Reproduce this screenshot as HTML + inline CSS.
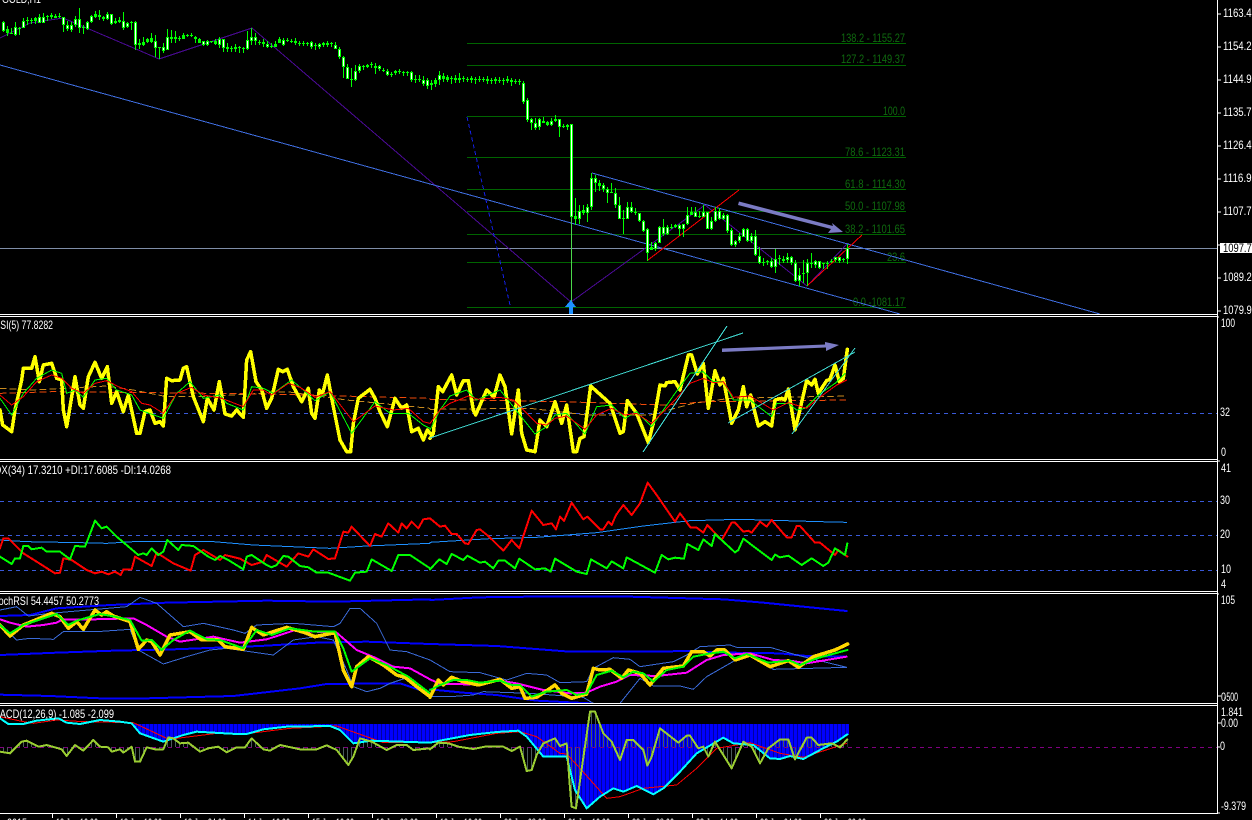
<!DOCTYPE html>
<html><head><meta charset="utf-8"><style>
html,body{margin:0;padding:0;background:#000;width:1252px;height:820px;overflow:hidden}
svg{display:block;position:absolute;left:0;top:0}
polyline,polygon{fill:none;vector-effect:non-scaling-stroke;stroke-linejoin:round;stroke-linecap:round}
text{font-family:"Liberation Sans",sans-serif;font-size:12px;fill:#fff;shape-rendering:auto}
.f{fill:#0f6a0f}
.y{stroke:#ff0;stroke-width:3.5}.g1{stroke:#0f0;stroke-width:1}.r1{stroke:#f00;stroke-width:1}
.or{stroke:#f04a0a;stroke-width:1;stroke-dasharray:6 4}.go{stroke:#c88a1e;stroke-width:1;stroke-dasharray:6 4}
.ab{stroke:#1e90ff;stroke-width:1}.re{stroke:#f00;stroke-width:2}.gr{stroke:#0f0;stroke-width:2}
.bb{stroke:#00f;stroke-width:2}.tb{stroke:#3a6ad8;stroke-width:1}.mg{stroke:#f0f;stroke-width:2}.ye{stroke:#ffd700;stroke-width:3.5}.gg{stroke:#0f0;stroke-width:2}
.cy{stroke:#0ff;stroke-width:2}.ol{stroke:#9acd32;stroke-width:2}
</style></head><body>
<svg width="1252" height="820" viewBox="0 0 1252 820" shape-rendering="crispEdges">
<defs>
<pattern id="b1" patternUnits="userSpaceOnUse" width="12" height="30"><rect width="12" height="30" fill="#00f"/><rect x="3" width="3" height="30" fill="#0000a0"/></pattern>
<pattern id="b2" patternUnits="userSpaceOnUse" width="12" height="30"><rect width="12" height="30" fill="#00f"/><rect x="9" width="3" height="30" fill="#0000a0"/></pattern>
<pattern id="s1" patternUnits="userSpaceOnUse" width="12" height="30"><rect x="9" width="3" height="30" fill="#4a5a5a"/></pattern>
<pattern id="s2" patternUnits="userSpaceOnUse" width="12" height="30"><rect x="3" width="3" height="30" fill="#4a5a5a"/></pattern>
<clipPath id="cm"><rect x="0" y="72" width="1290" height="300"/></clipPath>
</defs>

<!-- MAIN -->
<g stroke="#006400" stroke-width="1">
<path d="M467 43.5H906M467 65.5H906M467 116.5H906M467 157.5H906M467 189.5H906M467 211.5H906M467 234.5H906M467 262.5H906M467 307.5H906"/>
</g>
<text class="f" x="841" y="42" textLength="64" lengthAdjust="spacingAndGlyphs">138.2 - 1155.27</text>
<text class="f" x="841" y="63" textLength="64" lengthAdjust="spacingAndGlyphs">127.2 - 1149.37</text>
<text class="f" x="883" y="115" textLength="22" lengthAdjust="spacingAndGlyphs">100.0</text>
<text class="f" x="845" y="156" textLength="60" lengthAdjust="spacingAndGlyphs">78.6 - 1123.31</text>
<text class="f" x="845" y="188" textLength="60" lengthAdjust="spacingAndGlyphs">61.8 - 1114.30</text>
<text class="f" x="845" y="210" textLength="60" lengthAdjust="spacingAndGlyphs">50.0 - 1107.98</text>
<text class="f" x="845" y="233" textLength="60" lengthAdjust="spacingAndGlyphs">38.2 - 1101.65</text>
<text class="f" x="887" y="261" textLength="18" lengthAdjust="spacingAndGlyphs">23.6</text>
<text class="f" x="853" y="306" textLength="52" lengthAdjust="spacingAndGlyphs">0.0 -1081.17</text>
<path d="M0 248.5H1217" stroke="#7f8ea8" fill="none"/>
<path d="M0 38L30 23L63 18L136 49L159 59L252 28L571 302L705 205L807 286L848 243" stroke="#4b0a96" fill="none"/>
<path d="M0 65L900 314M592 173L1100 314" stroke="#3f6ee0" fill="none"/>
<path d="M467 117L510 305" stroke="#1420e6" stroke-dasharray="4 3" fill="none"/>
<path d="M648 260L739 190M807 286L862 235" stroke="#f00" fill="none"/>
<g transform="translate(.5 0)" fill="none">
<path stroke="#0f0" stroke-width="1" d="M3 21V32M7 26V36M11 28V34M15 22V36M19 27V35M23 18V28M27 17V25M31 18V24M35 17V24M39 14V23M43 13V23M47 15V21M51 13V19M55 14V18M59 13V18M63 17V32M67 21V31M71 22V32M75 16V27M79 8V33M83 25V34M87 21V30M91 15V23M95 11V18M99 10V20M103 16V21M107 12V20M111 14V25M115 18V24M119 17V23M123 12V30M127 22V28M131 21V30M135 21V50M139 39V49M143 37V46M147 38V43M151 33V43M155 35V57M159 47V59M163 43V53M167 29V50M171 30V43M175 31V43M179 36V41M183 33V39M187 34V37M191 33V37M195 36V43M199 38V43M203 41V46M207 40V46M211 41V43M215 39V45M219 37V48M223 39V52M227 43V52M231 46V52M235 44V52M239 46V53M243 47V53M247 31V50M251 28V45M255 33V45M259 40V45M263 39V47M267 41V48M271 43V48M275 41V47M279 37V43M283 38V46M287 38V42M291 39V43M295 38V45M299 41V46M303 41V46M307 42V46M311 41V49M315 43V50M319 43V49M323 42V47M327 41V47M331 42V47M335 42V49M339 47V59M343 56V78M347 64V79M351 68V87M355 65V81M359 64V73M363 65V70M367 64V68M371 62V68M375 63V74M379 65V71M383 68V72M387 69V76M391 72V77M395 70V75M399 69V74M403 71V76M407 71V76M411 71V82M415 75V83M419 75V82M423 76V86M427 78V89M431 80V90M435 78V87M439 71V85M443 73V82M447 75V82M451 76V84M455 75V83M459 73V83M463 76V82M467 77V82M471 76V83M475 77V84M479 76V82M483 77V82M487 76V84M491 78V84M495 77V84M499 77V83M503 78V85M507 76V83M511 78V86M515 79V84M519 79V85M523 81V104M527 98V122M531 118V130M535 118V130M539 118V130M543 117V123M547 121V126M551 118V126M555 115V122M559 119V137M563 124V128M567 124V130M571 124V218M575 198V225M579 205V224M583 205V215M587 204V222M591 173V210M595 175V192M599 180V191M603 183V192M607 187V203M611 183V193M615 188V208M619 197V219M623 210V234M627 202V219M631 202V213M635 208V215M639 213V222M643 220V232M647 228V261M651 242V250M655 242V251M659 226V243M663 219V236M667 225V235M671 224V229M675 224V228M679 224V236M683 224V237M687 207V225M691 207V215M695 207V217M699 211V218M703 205V217M707 212V229M711 217V230M715 207V222M719 208V220M723 213V220M727 214V233M731 228V246M735 240V247M739 233V243M743 228V237M747 228V242M751 233V243M755 230V256M759 247V264M763 258V266M767 260V265M771 258V268M775 249V273M779 255V265M783 256V263M787 253V263M791 256V265M795 260V282M799 268V286M803 260V283M807 259V286M811 253V268M815 260V268M819 261V269M823 263V269M827 261V269M831 259V263M835 257V262M839 257V263M843 258V262M847 244V264"/>
<path stroke="#0f0" stroke-width="3" d="M3 22V31M7 29V33M11 33V34M15 27V35M19 28V29M23 21V28M27 20V21M31 20V21M35 18V21M39 17V23M43 17V23M47 16V17M51 15V17M55 16V18M59 16V17M63 17V25M67 25V29M71 25V30M75 19V25M79 19V28M83 27V28M87 22V29M91 16V22M95 14V17M99 15V17M103 17V19M107 14V19M111 14V24M115 21V23M119 20V22M123 21V28M127 23V27M131 22V23M135 22V45M139 43V45M143 42V45M147 39V42M151 38V42M155 41V48M159 47V48M163 47V51M167 37V50M171 37V39M175 37V39M179 38V39M183 35V39M187 35V36M191 35V36M195 37V39M199 39V43M203 41V45M207 41V45M211 41V42M215 41V44M219 39V45M223 39V48M227 47V49M231 48V49M235 47V49M239 47V48M243 48V49M247 40V49M251 37V41M255 37V41M259 42V43M263 42V44M267 44V47M271 46V47M275 44V47M279 39V43M283 40V45M287 40V41M291 41V42M295 41V43M299 43V44M303 43V44M307 43V44M311 42V47M315 45V46M319 44V47M323 43V45M327 43V45M331 43V44M335 45V49M339 49V57M343 57V67M347 67V79M351 79V80M355 71V80M359 66V71M363 66V67M367 65V67M371 64V65M375 66V68M379 66V69M383 70V71M387 71V75M391 74V75M395 71V73M399 71V72M403 72V73M407 72V73M411 72V80M415 79V80M419 79V80M423 80V84M427 80V86M431 83V85M435 80V84M439 75V80M443 76V79M447 77V80M451 78V79M455 78V80M459 78V80M463 78V79M467 79V80M471 78V80M475 79V80M479 79V80M483 79V80M487 79V81M491 80V81M495 79V81M499 80V81M503 80V81M507 79V81M511 80V82M515 81V82M519 81V82M523 83V102M527 100V120M531 119V123M535 123V128M539 119V127M543 121V123M547 122V125M551 121V125M555 119V121M559 119V127M563 126V127M567 125V127M571 124V217M575 216V219M579 211V219M583 210V213M587 207V213M591 178V207M595 178V183M599 183V186M603 185V189M607 189V193M611 192V193M615 193V205M619 205V219M623 218V219M627 207V219M631 207V212M635 212V213M639 213V221M643 221V231M647 229V253M651 247V250M655 243V249M659 227V243M663 227V234M667 227V234M671 227V228M675 225V227M679 225V229M683 224V229M687 215V224M691 212V215M695 212V217M699 216V217M703 212V217M707 212V229M711 221V229M715 211V221M719 211V219M723 215V219M727 215V231M731 230V245M735 241V245M739 236V241M743 229V237M747 229V241M751 236V241M755 236V255M759 256V263M763 262V263M767 261V262M771 261V267M775 259V267M779 258V259M783 259V261M787 257V260M791 257V263M795 263V281M799 275V281M803 273V274M807 263V273M811 263V264M815 261V265M819 261V268M823 263V264M827 263V264M831 261V262M835 257V260M839 257V261M843 259V260M847 248V259"/>
<path stroke="#fff" stroke-width="1" d="M3 23V30M15 28V34M23 22V27M39 18V22M43 18V22M63 18V24M67 26V28M71 26V29M75 20V24M79 20V27M87 23V28M91 17V21M107 15V18M111 15V23M123 22V27M127 24V26M135 23V44M155 42V47M163 48V50M167 38V49M203 42V44M207 42V44M219 40V44M223 40V47M247 41V48M251 38V40M255 38V40M267 45V46M283 41V44M311 43V46M319 45V46M335 46V48M339 50V56M343 58V66M347 68V78M355 72V79M359 67V70M379 67V68M387 72V74M411 73V79M423 81V83M427 81V85M439 76V79M523 84V101M527 101V119M531 120V122M535 124V127M539 120V126M551 122V124M559 120V126M571 125V216M579 212V218M587 208V212M591 179V206M595 179V182M603 186V188M607 190V192M615 194V204M619 206V218M627 208V218M631 208V211M639 214V220M643 222V230M647 230V252M655 244V248M659 228V242M663 228V233M667 228V233M679 226V228M683 225V228M687 216V223M695 213V216M703 213V216M707 213V228M711 222V228M715 212V220M719 212V218M723 216V218M727 216V230M731 231V244M735 242V244M739 237V240M743 230V236M747 230V240M751 237V240M755 237V254M759 257V262M771 262V266M775 260V266M787 258V259M791 258V262M795 264V280M799 276V280M807 264V272M815 262V264M819 262V267M835 258V259M839 258V260M847 249V258"/>
</g>
<path d="M571.5 218V302" stroke="#4ad84a" fill="none"/>
<path d="M570.7 300L576 307H573V314H569V307H565Z" fill="#1e90ff"/>
<g fill="#7b7bc4" stroke="none" shape-rendering="auto">
<path d="M739 201.5L833 226L832 223L843 232L828 233L831 229L738 205Z"/>
<path d="M722 348.5L825 344.5L825 342L839 345L826 351L826 347.5L722 352Z"/>
</g>

<!-- RSI -->
<path d="M0 413.5H1217" stroke="#3a5ad8" stroke-dasharray="4 4" fill="none"/>
<g transform="translate(0 310) scale(.33333)">
<polyline class="go" points="0,235 100,240 320,228 400,240 500,260 620,260 860,245 1040,270 1290,295"/>
<polyline class="or" points="0,250 160,245 460,248 800,252 1290,265"/>
<polyline class="y" points="0,300 8,345 35,365 45,300 65,210 70,175 95,175 105,140 118,215 130,165 155,160 170,205 185,210 190,300 200,350 225,200 240,285 250,295 265,200 285,157 305,205 322,170 335,280 350,245 370,305 385,255 410,370 420,370 435,305 450,300 465,340 480,335 490,348 500,205 515,212 540,210 550,175 560,170 580,260 610,335 622,265 642,300 658,215 675,312 695,318 710,300 730,322 740,150 752,125 768,215 785,240 800,295 815,265 835,178 848,185 862,178 880,230 905,275 925,235 935,310 945,325 958,240 968,250 982,195 1000,290 1020,390 1040,425 1052,425 1060,340 1075,265 1110,238 1125,265 1140,305 1162,350 1185,265 1205,295 1220,285 1235,365 1255,355 1270,390 1282,360 1290,370"/>
<polyline class="g1" points="0,265 35,315 70,250 110,205 155,180 185,190 200,250 225,240 250,262 285,210 320,205 350,240 395,255 420,300 490,325 530,250 570,215 610,265 660,255 680,280 730,300 755,230 790,235 820,250 875,210 910,240 945,272 990,245 1055,370 1125,275 1170,310 1225,310 1270,345 1290,355"/>
<polyline class="r1" points="0,255 35,285 70,260 110,215 155,195 185,205 215,235 250,250 285,220 320,212 355,230 395,245 425,280 450,285 490,310 530,250 575,232 610,255 665,265 730,290 760,240 790,240 815,255 865,220 900,232 945,262 990,245 1060,335 1125,288 1180,300 1225,295 1270,335 1290,340"/>
</g>
<g transform="translate(430 310) scale(.33333)">
<polyline class="go" points="0,298 300,295 470,315 660,315 790,280 900,265 1250,258"/>
<polyline class="or" points="0,268 400,275 700,285 830,275 1250,270"/>
<polyline class="y" points="0,385 10,370 25,230 38,245 65,195 80,255 100,212 115,212 130,300 137,315 170,240 192,262 210,195 225,230 245,372 265,240 275,370 290,420 315,425 330,330 350,350 375,275 395,340 410,285 430,425 440,425 450,385 462,380 482,228 540,280 570,370 580,365 592,272 620,310 655,398 670,340 690,225 705,228 710,218 735,215 750,240 775,135 785,135 802,192 820,160 835,295 855,182 870,225 880,205 905,340 925,300 940,230 950,290 962,255 985,348 1005,335 1025,348 1035,270 1055,265 1065,270 1075,237 1095,360 1105,320 1130,212 1145,225 1155,208 1165,250 1190,212 1200,208 1215,165 1228,215 1240,205 1252,118"/>
<polyline class="g1" points="0,360 30,300 60,258 110,240 140,270 210,240 250,290 315,372 350,350 375,315 410,310 465,372 500,290 545,285 585,325 620,305 665,350 735,250 780,190 820,185 850,215 880,215 910,270 960,270 1025,320 1040,280 1075,280 1100,300 1125,295 1165,255 1215,220 1245,190"/>
<polyline class="r1" points="0,340 30,300 60,280 115,258 145,268 210,262 250,270 320,340 350,345 375,325 410,318 465,358 500,315 545,295 585,315 620,310 665,340 735,270 780,220 820,205 850,218 880,215 910,262 960,258 1030,300 1075,278 1130,295 1165,265 1220,225 1250,210"/>
</g>
<path d="M430 438L743 333M643 452L727 326M728 423L855 352M792 434L855 348" stroke="#40d8d0" fill="none"/>

<!-- ADX -->
<path d="M0 501.5H1217M0 535.5H1217M0 570.5H1217" stroke="#3a5ad8" stroke-dasharray="4 4" fill="none"/>
<g transform="translate(0 460) scale(.33333)">
<polyline class="ab" points="0,240 80,245 240,248 320,250 400,245 640,245 760,255 920,262 990,265 1100,258 1290,250"/>
<polyline class="re" points="0,265 10,235 25,235 70,280 110,305 165,340 180,338 190,295 215,300 260,330 285,340 305,335 325,343 345,335 362,345 370,328 395,328 405,290 455,318 470,278 520,310 572,332 585,285 610,270 660,300 675,285 720,296 755,315 790,305 800,285 860,320 895,280 925,290 940,268 985,297 1005,295 1030,215 1045,218 1055,200 1110,258 1125,222 1145,230 1165,190 1195,218 1205,190 1220,205 1235,185 1255,205 1270,178 1290,175"/>
<polyline class="gr" points="0,290 35,312 45,295 60,295 70,258 85,258 95,268 125,263 140,275 180,275 210,298 225,258 255,260 265,235 285,182 305,205 320,200 350,230 415,285 430,280 440,285 455,265 475,285 490,275 502,240 535,270 545,255 580,258 625,290 645,300 660,288 685,300 730,328 740,290 755,285 800,315 815,322 830,315 850,288 865,290 900,318 925,322 950,338 985,338 1050,362 1065,338 1100,335 1115,298 1175,333 1195,285 1230,285 1290,325"/>
</g>
<g transform="translate(430 460) scale(.33333)">
<polyline class="ab" points="0,247 180,236 320,232 500,218 640,198 780,182 930,178 1170,185 1250,187"/>
<polyline class="re" points="0,175 30,200 45,197 65,222 80,222 105,250 115,252 140,210 150,208 175,228 220,272 245,240 268,265 305,152 340,195 365,190 378,208 390,170 402,183 425,128 460,178 472,170 510,208 520,208 535,185 545,195 558,165 580,135 605,165 630,130 653,68 680,105 735,185 750,160 782,203 800,203 820,218 832,195 875,240 905,188 915,188 940,215 955,212 965,218 990,185 1010,200 1025,180 1070,232 1085,232 1100,198 1110,198 1155,248 1170,248 1215,285 1225,270 1252,290"/>
<polyline class="gr" points="0,328 28,298 50,312 65,282 100,300 112,287 150,308 165,305 190,325 205,302 225,302 255,325 268,296 315,328 345,325 362,335 375,296 440,335 470,342 483,298 530,325 545,304 580,325 590,292 675,338 695,285 715,298 735,293 762,296 772,252 805,270 820,238 845,258 855,222 915,277 925,270 940,236 1025,300 1035,284 1050,292 1075,287 1115,315 1145,295 1180,318 1195,308 1215,265 1245,285 1252,250"/>
</g>

<!-- STOCH -->
<g transform="translate(0 590) scale(.33333)">
<polyline class="bb" points="0,78 90,75 170,55 330,45 500,38 800,32 1000,35 1290,28"/>
<polyline class="bb" points="0,195 170,188 340,182 520,178 780,168 950,158 1100,155 1290,162"/>
<polyline class="bb" points="0,314 150,318 300,325 440,325 700,318 900,295 980,282 1200,280 1290,310"/>
<polyline class="tb" points="0,60 50,50 85,78 150,70 380,50 420,22 470,40 550,110 610,100 700,120 735,130 770,105 880,100 1000,110 1020,100 1050,55 1080,55 1130,100 1170,180 1220,185 1290,210"/>
<polyline class="tb" points="0,100 50,150 90,145 160,148 190,125 290,125 390,118 415,180 490,222 560,200 630,180 680,175 820,195 880,150 950,140 1000,150 1040,240 1060,290 1100,305 1140,295 1170,280 1215,265 1290,320"/>
<polyline class="mg" points="0,88 30,98 80,110 130,105 170,98 190,88 280,88 400,85 440,105 500,140 540,155 640,140 720,158 800,148 880,122 1010,128 1070,180 1130,205 1180,230 1230,235 1290,268"/>
<polyline class="ye" points="0,105 30,138 70,105 155,70 180,80 205,115 230,95 250,118 285,60 305,75 320,65 340,78 390,95 415,178 440,150 455,155 480,195 510,135 570,125 605,150 655,150 675,170 730,178 755,112 790,135 860,112 915,128 945,140 1005,128 1030,240 1055,290 1070,230 1105,200 1150,225 1190,255 1215,262 1250,290 1290,320"/>
<polyline class="gg" points="0,105 30,130 70,105 170,72 205,105 230,92 300,72 345,80 390,90 425,152 455,150 485,180 520,150 570,122 620,148 660,150 730,175 770,120 815,135 870,115 945,125 1005,125 1030,175 1055,245 1110,205 1160,225 1225,260 1290,310"/>
</g>
<g transform="translate(430 590) scale(.33333)">
<polyline class="bb" points="0,30 150,22 300,20 600,20 880,28 1000,38 1100,48 1250,63"/>
<polyline class="bb" points="0,162 200,168 420,185 680,185 760,183 900,188 1050,190 1130,198 1250,200"/>
<polyline class="bb" points="0,298 100,308 200,315 320,332 480,340"/>
<polyline class="tb" points="0,210 60,245 150,248 230,270 290,250 350,255 390,278 470,275 490,235 550,203 600,208 630,230 730,215 770,195 810,170 900,165 920,172 1020,172 1100,195 1250,232"/>
<polyline class="tb" points="0,320 60,320 130,315 160,305 300,310 460,322 490,340"/>
<polyline class="tb" points="570,340 630,265 670,288 750,288 790,298 830,260 900,220 950,190 1030,238 1250,232"/>
<polyline class="mg" points="0,268 30,282 120,283 210,272 260,280 340,300 420,310 470,308 510,290 560,275 600,255 680,258 770,248 830,210 880,195 960,190 1030,210 1080,212 1130,220 1250,200"/>
<polyline class="ye" points="0,322 25,270 40,285 65,262 100,275 145,285 210,268 245,295 270,290 285,325 320,322 375,285 395,310 425,325 470,312 490,235 510,240 540,238 575,265 595,240 630,250 660,285 700,235 760,228 785,185 820,185 840,198 860,180 885,180 915,210 960,195 1020,230 1075,212 1105,232 1150,200 1215,180 1253,162"/>
<polyline class="gg" points="0,300 30,285 70,270 110,270 150,278 210,272 245,285 270,285 305,320 350,305 410,300 440,315 470,310 500,255 545,242 580,262 610,245 640,250 670,275 710,240 760,230 790,200 830,192 880,185 915,205 950,192 1015,218 1080,212 1110,225 1160,205 1252,180"/>
</g>
<rect x="0" y="704" width="1217" height="1" fill="#000"/>

<!-- MACD -->
<g transform="translate(0 700) scale(.33333)">
<g clip-path="url(#cm)"><polygon style="fill:url(#b1)" points="0,72 0,55 25,72 70,72 110,62 175,55 200,68 240,72 300,60 360,65 395,70 420,100 490,125 550,105 590,95 640,98 710,102 740,102 790,88 860,80 990,78 1020,90 1060,130 1115,122 1290,128 1290,72"/></g>
<polygon style="fill:url(#s1)" points="0,141 0,155 30,160 65,125 80,122 115,140 140,135 185,148 200,168 225,135 250,152 280,120 300,140 325,142 335,155 360,148 370,158 395,140 405,185 420,185 440,142 465,148 490,148 505,112 520,115 540,130 565,128 600,155 625,145 655,140 680,157 710,142 735,142 755,115 790,148 810,152 840,135 900,148 950,148 980,136 1010,150 1045,195 1060,170 1080,115 1115,125 1160,150 1190,135 1220,135 1240,150 1290,145 1290,141"/>
</g>
<g transform="translate(430 700) scale(.33333)">
<polygon style="fill:url(#b2)" points="0,72 0,128 40,120 120,105 200,96 265,92 290,110 340,170 410,170 435,270 470,325 510,290 550,265 580,275 620,258 645,270 670,283 700,265 750,215 800,160 880,113 910,130 970,135 1020,175 1050,177 1080,168 1120,177 1170,150 1220,125 1257,103 1257,72"/>
<polygon style="fill:url(#s2)" points="0,141 0,148 25,128 55,130 85,140 130,147 165,140 220,140 245,153 270,140 290,213 305,210 320,165 340,130 375,115 390,138 410,130 420,265 425,320 438,325 480,35 495,35 520,100 545,125 570,180 590,120 610,120 640,150 652,197 665,170 690,85 745,128 770,107 780,107 805,145 820,140 835,170 855,125 905,205 940,125 965,140 990,190 1015,145 1050,118 1075,118 1095,178 1130,113 1145,113 1165,135 1205,130 1230,142 1252,118 1252,141"/>
</g>
<path d="M0 747.5H1217" stroke="#800080" stroke-dasharray="4 4" fill="none"/>
<g transform="translate(0 700) scale(.33333)">
<polyline class="r1" points="0,50 70,65 100,70 170,60 250,65 400,68 500,115 530,115 650,100 750,100 870,85 1010,78 1100,110 1150,128 1290,128"/>
<polyline class="cy" points="0,55 25,72 70,72 110,62 175,55 200,68 240,72 300,60 360,65 395,70 420,100 490,125 550,105 590,95 640,98 710,102 740,102 790,88 860,80 990,78 1020,90 1060,130 1115,122 1290,128"/>
<polyline class="ol" points="0,155 30,160 65,125 80,122 115,140 140,135 185,148 200,168 225,135 250,152 280,120 300,140 325,142 335,155 360,148 370,158 395,140 405,185 420,185 440,142 465,148 490,148 505,112 520,115 540,130 565,128 600,155 625,145 655,140 680,157 710,142 735,142 755,115 790,148 810,152 840,135 900,148 950,148 980,136 1010,150 1045,195 1060,170 1080,115 1115,125 1160,150 1190,135 1220,135 1240,150 1290,145"/>
</g>
<g transform="translate(430 700) scale(.33333)">
<polyline class="r1" points="0,128 70,125 200,100 270,95 320,110 390,160 410,162 450,205 530,295 570,290 640,265 740,255 800,205 860,145 960,128 1050,160 1120,172 1250,130"/>
<polyline class="cy" points="0,128 40,120 120,105 200,96 265,92 290,110 340,170 410,170 435,270 470,325 510,290 550,265 580,275 620,258 645,270 670,283 700,265 750,215 800,160 880,113 910,130 970,135 1020,175 1050,177 1080,168 1120,177 1170,150 1220,125 1252,103"/>
<polyline class="ol" points="0,148 25,128 55,130 85,140 130,147 165,140 220,140 245,153 270,140 290,213 305,210 320,165 340,130 375,115 390,138 410,130 420,265 425,320 438,325 480,35 495,35 520,100 545,125 570,180 590,120 610,120 640,150 652,197 665,170 690,85 745,128 770,107 780,107 805,145 820,140 835,170 855,125 905,205 940,125 965,140 990,190 1015,145 1050,118 1075,118 1095,178 1130,113 1145,113 1165,135 1205,130 1230,142 1252,118"/>
</g>

<!-- FRAME -->
<path d="M0 314.5H1217M0 316.5H1217M0 459.5H1217M0 461.5H1217M0 591.5H1217M0 593.5H1217M0 703.5H1217M0 705.5H1217M0 813.5H1217M1217.5 0V814" stroke="#fff" fill="none"/>
<path d="M1218 14H1221M1218 47H1221M1218 80H1221M1218 113H1221M1218 146H1221M1218 179H1221M1218 212H1221M1218 245H1221M1218 278H1221M1218 311H1221M1218 317H1219M1218 461H1220M1218 594H1219M1218 696H1221M1218 723H1221M1218 747H1220M1218 813H1220M52.5 814V818M116.5 814V818M180.5 814V818M244.5 814V818M308.5 814V818M372.5 814V818M436.5 814V818M500.5 814V818M564.5 814V818M628.5 814V818M692.5 814V818M756.5 814V818M820.5 814V818" stroke="#fff" fill="none"/>

<!-- LABELS -->
<text x="2" y="3" textLength="39" lengthAdjust="spacingAndGlyphs">GOLD,H1</text>
<text x="-6" y="329" textLength="59" lengthAdjust="spacingAndGlyphs">RSI(5) 77.8282</text>
<text x="-12" y="474" textLength="183" lengthAdjust="spacingAndGlyphs">ADX(34) 17.3210 +DI:17.6085 -DI:14.0268</text>
<text x="-10" y="605" textLength="109" lengthAdjust="spacingAndGlyphs">StochRSI 54.4457 50.2773</text>
<text x="-8" y="718" textLength="122" lengthAdjust="spacingAndGlyphs">MACD(12,26,9) -1.085 -2.099</text>

<text x="1223" y="17" textLength="34" lengthAdjust="spacingAndGlyphs">1163.45</text>
<text x="1223" y="50" textLength="34" lengthAdjust="spacingAndGlyphs">1154.20</text>
<text x="1223" y="83" textLength="34" lengthAdjust="spacingAndGlyphs">1144.95</text>
<text x="1223" y="116" textLength="34" lengthAdjust="spacingAndGlyphs">1135.70</text>
<text x="1223" y="149" textLength="34" lengthAdjust="spacingAndGlyphs">1126.45</text>
<text x="1223" y="182" textLength="34" lengthAdjust="spacingAndGlyphs">1116.95</text>
<text x="1223" y="215" textLength="34" lengthAdjust="spacingAndGlyphs">1107.70</text>
<rect x="1220" y="243" width="32" height="10" fill="#fff"/>
<text x="1223" y="252" textLength="34" lengthAdjust="spacingAndGlyphs" style="fill:#000">1097.70</text>
<text x="1223" y="281" textLength="34" lengthAdjust="spacingAndGlyphs">1089.20</text>
<text x="1223" y="314" textLength="34" lengthAdjust="spacingAndGlyphs">1079.95</text>

<text x="1221" y="327" textLength="14" lengthAdjust="spacingAndGlyphs">100</text>
<text x="1220" y="416" textLength="10" lengthAdjust="spacingAndGlyphs">32</text>
<text x="1221" y="456" textLength="5" lengthAdjust="spacingAndGlyphs">0</text>
<text x="1221" y="472" textLength="10" lengthAdjust="spacingAndGlyphs">41</text>
<text x="1220" y="504" textLength="10" lengthAdjust="spacingAndGlyphs">30</text>
<text x="1220" y="538" textLength="10" lengthAdjust="spacingAndGlyphs">20</text>
<text x="1221" y="573" textLength="10" lengthAdjust="spacingAndGlyphs">10</text>
<text x="1221" y="588" textLength="5" lengthAdjust="spacingAndGlyphs">4</text>
<text x="1221" y="604" textLength="14" lengthAdjust="spacingAndGlyphs">105</text>
<text x="1221" y="701" textLength="5" lengthAdjust="spacingAndGlyphs">0</text>
<text x="1224" y="701" textLength="14" lengthAdjust="spacingAndGlyphs">-500</text>
<text x="1221" y="716" textLength="22" lengthAdjust="spacingAndGlyphs">1.841</text>
<text x="1221" y="727" textLength="17" lengthAdjust="spacingAndGlyphs">0.00</text>
<text x="1220" y="750" textLength="5" lengthAdjust="spacingAndGlyphs">0</text>
<text x="1221" y="810" textLength="25" lengthAdjust="spacingAndGlyphs">-9.379</text>

<text x="7" y="827" textLength="20" lengthAdjust="spacingAndGlyphs">2015</text>
<text x="56" y="827" textLength="42" lengthAdjust="spacingAndGlyphs">12 Jan 16:00</text>
<text x="120" y="827" textLength="42" lengthAdjust="spacingAndGlyphs">13 Jan 16:00</text>
<text x="184" y="827" textLength="42" lengthAdjust="spacingAndGlyphs">13 Jan 24:00</text>
<text x="248" y="827" textLength="42" lengthAdjust="spacingAndGlyphs">14 Jan 16:00</text>
<text x="312" y="827" textLength="42" lengthAdjust="spacingAndGlyphs">15 Jan 16:00</text>
<text x="376" y="827" textLength="42" lengthAdjust="spacingAndGlyphs">16 Jan 08:00</text>
<text x="440" y="827" textLength="42" lengthAdjust="spacingAndGlyphs">19 Jan 16:00</text>
<text x="504" y="827" textLength="42" lengthAdjust="spacingAndGlyphs">20 Jan 08:00</text>
<text x="568" y="827" textLength="42" lengthAdjust="spacingAndGlyphs">21 Jan 16:00</text>
<text x="632" y="827" textLength="42" lengthAdjust="spacingAndGlyphs">22 Jan 08:00</text>
<text x="696" y="827" textLength="42" lengthAdjust="spacingAndGlyphs">23 Jan 14:00</text>
<text x="760" y="827" textLength="42" lengthAdjust="spacingAndGlyphs">26 Jan 04:00</text>
<text x="824" y="827" textLength="42" lengthAdjust="spacingAndGlyphs">26 Jan 20:00</text>
</svg>
</body></html>
